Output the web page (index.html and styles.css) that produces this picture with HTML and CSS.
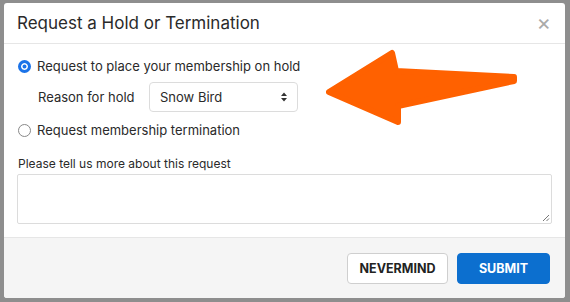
FILE: index.html
```html
<!DOCTYPE html>
<html>
<head>
<meta charset="utf-8">
<link rel="stylesheet" href="styles.css">
</head>
<body>
<div class="backdrop">
  <div class="modal">
    <div class="modal-header">
      <h2 class="modal-title">Request a Hold or Termination</h2>
      <span class="close">&times;</span>
    </div>
    <div class="modal-body">
      <label class="radio-row">
        <span class="radio checked"></span>
        <span>Request to place your membership on hold</span>
      </label>
      <div class="reason-row">
        <span class="reason-label">Reason for hold</span>
        <div class="select">
          <span>Snow Bird</span>
          <svg class="chev" width="8" height="12" viewBox="0 0 8 12"><path d="M1 5 L4 1.5 L7 5 Z M1 7 L4 10.5 L7 7 Z" fill="#333"/></svg>
        </div>
      </div>
      <label class="radio-row second">
        <span class="radio"></span>
        <span>Request membership termination</span>
      </label>
      <div class="more-label">Please tell us more about this request</div>
      <div class="textarea">
        <svg class="grip" width="9" height="9" viewBox="0 0 9 9"><path d="M8 2 L2 8 M8 5.5 L5.5 8" stroke="#777" stroke-width="1"/></svg>
      </div>
    </div>
    <div class="modal-footer">
      <button class="btn btn-default">NEVERMIND</button>
      <button class="btn btn-primary">SUBMIT</button>
    </div>
    <svg class="arrow" width="200" height="80" viewBox="0 0 200 80">
      <polygon points="3,45 66,6 70,24 188,30 188,34 72,59 72,75" fill="#ff6100" stroke="#ff6100" stroke-width="6" stroke-linejoin="round"/>
    </svg>
  </div>
</div>
</body>
</html>
```
FILE: styles.css
```css
html, body {
  margin: 0;
  padding: 0;
}
body {
  width: 570px;
  height: 302px;
  background: #8e8e8e;
  font-family: Inter, "Noto Sans", "Liberation Sans", sans-serif;
  color: #2a2a2a;
  overflow: hidden;
}
.backdrop {
  padding: 3px 5px 0 4px;
}
.modal {
  position: relative;
  width: 561px;
  height: 295px;
  background: #fff;
  border-radius: 3px;
  display: flex;
  flex-direction: column;
  overflow: hidden;
}
.modal-header {
  height: 40px;
  display: flex;
  align-items: center;
  justify-content: space-between;
  padding: 0 14px 0 13px;
  border-bottom: 1px solid #e6e6e6;
  flex: none;
}
.modal-title {
  margin: 0;
  font-size: 17px;
  font-weight: 400;
  color: #2a2a2a;
}
.close {
  font-size: 22px;
  color: #aaa;
  line-height: 1;
  margin-top: -2px;
}
.modal-body {
  flex: 1;
  padding: 12px 13px 0 14px;
  font-size: 13px;
  color: #2a2a2a;
}
.radio-row {
  display: flex;
  align-items: center;
  height: 20px;
  gap: 6px;
}
.radio {
  width: 11px;
  height: 11px;
  border: 1px solid #888;
  border-radius: 50%;
  box-sizing: content-box;
  background: #fff;
  flex: none;
}
.radio.checked {
  width: 7px;
  height: 7px;
  border: 3px solid #1b73e8;
  background: #1b73e8;
  box-shadow: inset 0 0 0 1.5px #fff;
}
.reason-row {
  display: flex;
  align-items: center;
  margin-top: 6px;
  padding-left: 20px;
}
.reason-label {
  width: 111px;
}
.select {
  width: 149px;
  height: 30px;
  box-sizing: border-box;
  border: 1px solid #dcdcdc;
  border-radius: 4px;
  display: flex;
  align-items: center;
  justify-content: space-between;
  padding: 0 9px 0 10px;
  font-size: 13px;
}
.radio-row.second {
  margin-top: 8px;
}
.more-label {
  margin-top: 14px;
  height: 20px;
  line-height: 20px;
  font-size: 12px;
}
.textarea {
  margin-top: 0;
  width: 535px;
  height: 50px;
  box-sizing: border-box;
  border: 1px solid #dcdcdc;
  border-radius: 2px;
  position: relative;
  margin-left: -1px;
}
.grip {
  position: absolute;
  right: 1px;
  bottom: 1px;
}
.modal-footer {
  flex: none;
  height: 60px;
  background: #f5f5f5;
  border-top: 1px solid #e6e6e6;
  display: flex;
  justify-content: flex-end;
  align-items: center;
  gap: 9px;
  padding: 0 15px 0 0;
}
.btn {
  height: 31px;
  font-family: Inter, "Noto Sans", "Liberation Sans", sans-serif;
  font-size: 12.5px;
  font-weight: 700;
  border-radius: 4px;
  padding: 0;
}
.btn-default {
  width: 101px;
  background: #fff;
  border: 1px solid #cfcfcf;
  color: #222;
}
.btn-primary {
  width: 93px;
  background: #0c6fcf;
  border: 1px solid #0c6fcf;
  color: #fff;
}
.arrow {
  position: absolute;
  left: 322px;
  top: 44px;
}
```
